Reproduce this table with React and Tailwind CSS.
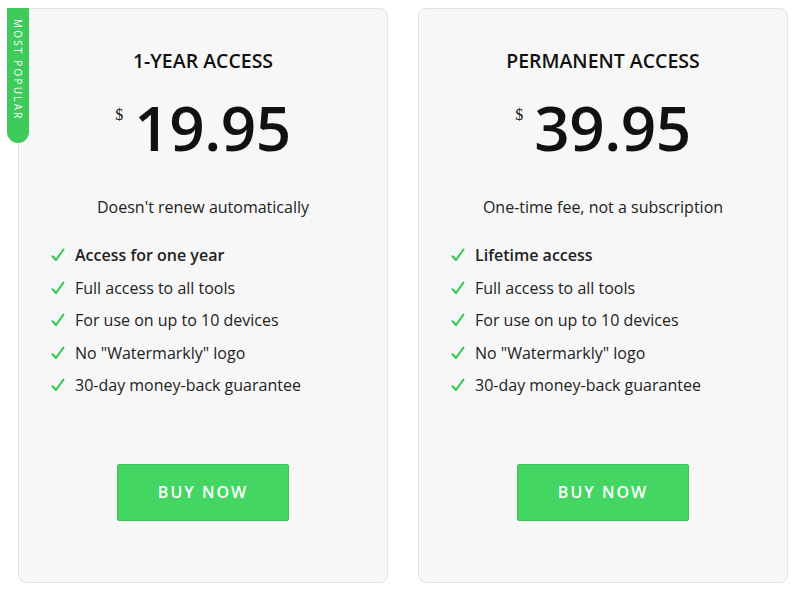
const plans = [
  {
    title: '1-YEAR ACCESS',
    price: '19.95',
    note: "Doesn't renew automatically",
    first: 'Access for one year',
    popular: true,
  },
  {
    title: 'PERMANENT ACCESS',
    price: '39.95',
    note: 'One-time fee, not a subscription',
    first: 'Lifetime access',
    popular: false,
  },
];

const common = [
  'Full access to all tools',
  'For use on up to 10 devices',
  'No "Watermarkly" logo',
  '30-day money-back guarantee',
];

const Check = () => (
  <svg width="14" height="14" viewBox="0 0 14 14" className="mr-[10px] shrink-0">
    <path d="M1.5 8.2 L5 12 L12.5 1.5" fill="none" stroke="#2cc84f" strokeWidth="2" strokeLinecap="round" strokeLinejoin="round" />
  </svg>
);

const Feature = ({ text, bold }) => (
  <li className="flex items-center h-[32.5px]">
    <Check />
    <span className={bold ? 'font-semibold' : ''}>{text}</span>
  </li>
);

const PlanCard = ({ plan }) => (
  <div className="relative w-[370px] h-[575px] rounded-lg border border-[#e2e2e2] bg-[#f7f7f7] flex flex-col items-center">
    {plan.popular && (
      <div className="absolute left-[-12px] top-[-1px] w-[22px] h-[135px] rounded-b-[11px] bg-[#3ecb5c] flex items-start justify-center pt-[11px]">
        <span className="[writing-mode:vertical-rl] text-[10px] tracking-[2.2px] text-white leading-none">
          MOST POPULAR
        </span>
      </div>
    )}

    <h2 className="mt-[40px] text-[19.5px] leading-[24px] font-semibold text-[#111]">{plan.title}</h2>

    <div className="mt-[22px] flex items-start">
      <span className="font-['Liberation_Serif',serif] text-[16px] leading-none mt-[12px] mr-[11px]">$</span>
      <span className="text-[62px] leading-[64px] font-semibold tracking-[-0.5px]">{plan.price}</span>
    </div>

    <p className="mt-[36px] text-[16px] leading-[24px] text-[#222]">{plan.note}</p>

    <ul className="mt-[20px] self-start pl-[32px] text-[16px] text-[#222]">
      <Feature text={plan.first} bold />
      {common.map((c) => (
        <Feature key={c} text={c} />
      ))}
    </ul>

    <button className="mt-[62px] w-[172px] h-[57px] rounded-[2px] bg-[#44d662] border border-[#3cc45a] text-white text-[16px] font-semibold tracking-[2px]">
      BUY NOW
    </button>
  </div>
);

export default function App() {
  return (
    <div className="w-[798px] h-[590px] bg-white flex gap-[30px] pl-[18px] pt-[8px] font-['Open_Sans',sans-serif] text-[#111]">
      {plans.map((p) => (
        <PlanCard key={p.title} plan={p} />
      ))}
    </div>
  );
}
